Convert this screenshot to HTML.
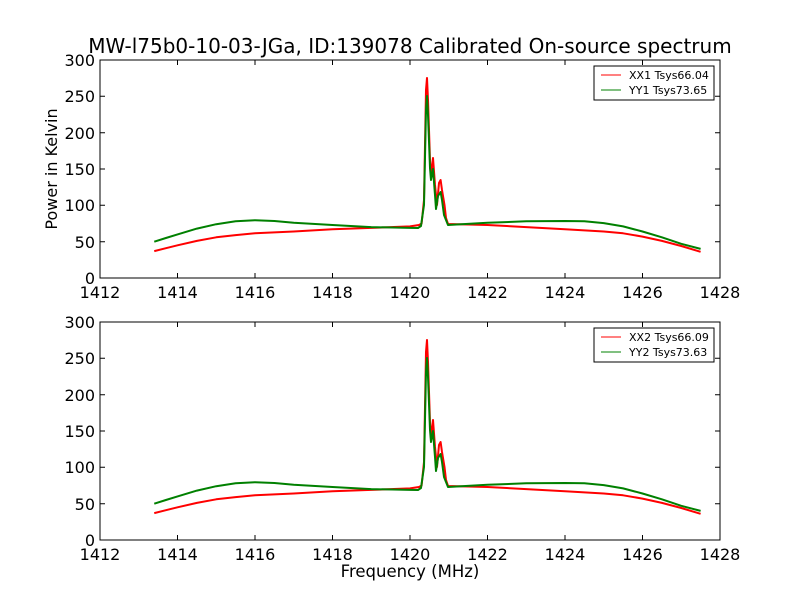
<!DOCTYPE html><html><head><style>body{margin:0;background:#fff}svg{display:block}text{font-family:"DejaVu Sans",sans-serif;fill:#000}</style></head><body>
<svg width="800" height="600" viewBox="0 0 800 600" xmlns="http://www.w3.org/2000/svg">
<rect width="800" height="600" fill="#fff"/>
<text x="410" y="53" font-size="20" text-anchor="middle">MW-l75b0-10-03-JGa, ID:139078 Calibrated On-source spectrum</text>
<defs>
<g id="ax">
<polyline fill="none" stroke="#ff0000" stroke-width="2" stroke-linejoin="round" points="154.25,251.1 165.9,248.2 177.5,245.3 196.9,240.9 216.25,237.3 235.6,235.1 255,233.3 293.75,231.5 332.5,229.3 371.25,227.9 410,226.4 419,225 421.6,223.5 424,200 426,90 427,78 428,100 430,160 431,176 433,158 435,185 437,205 439,183 440.6,180 442,190 444.5,205 446,218 448,224 487.5,225 526.25,227.1 565,229.3 603.75,231.5 623.1,233.3 642.5,236.6 661.9,240.9 681.25,246 700.6,251.8"/>
<polyline fill="none" stroke="#008000" stroke-width="2" stroke-linejoin="round" points="154.25,241.7 165.9,238 177.5,234.4 196.9,228.6 216.25,224.2 235.6,221.3 255,220.2 274.4,221 293.75,222.8 332.5,225 371.25,227.1 410,227.9 418,228 421,226 424,205 426,110 427,96 428,115 430,168 431,180 433,169 435,195 436,209 438,196 440.6,192 442,200 444,215 448,225 487.5,222.8 526.25,221.3 565,221 584.4,221.3 603.75,223.1 623.1,226.4 642.5,231.5 661.9,237.3 681.25,243.8 700.6,248.9"/>
<rect x="100" y="60" width="620" height="218" fill="none" stroke="#000" stroke-width="1"/>
<g stroke="#000" stroke-width="1">
<path d="M100,278v-5M177.5,278v-5M255,278v-5M332.5,278v-5M410,278v-5M487.5,278v-5M565,278v-5M642.5,278v-5M720,278v-5M100,60v5M177.5,60v5M255,60v5M332.5,60v5M410,60v5M487.5,60v5M565,60v5M642.5,60v5M720,60v5"/>
<path d="M100,241.7h5M100,205.3h5M100,169h5M100,132.7h5M100,96.3h5M720,241.7h-5M720,205.3h-5M720,169h-5M720,132.7h-5M720,96.3h-5"/>
</g>
<g font-size="16" text-anchor="end">
<text x="95" y="284">0</text><text x="95" y="248">50</text><text x="95" y="211">100</text><text x="95" y="175">150</text><text x="95" y="139">200</text><text x="95" y="102">250</text><text x="95" y="66">300</text>
</g>
<g font-size="16" text-anchor="middle">
<text x="100" y="298">1412</text><text x="177.5" y="298">1414</text><text x="255" y="298">1416</text><text x="332.5" y="298">1418</text><text x="410" y="298">1420</text><text x="487.5" y="298">1422</text><text x="565" y="298">1424</text><text x="642.5" y="298">1426</text><text x="720" y="298">1428</text>
</g>
<rect x="594" y="66" width="120" height="34" fill="#fff" stroke="#000"/>
<path d="M601,75h20" stroke="#ff0000"/><path d="M601,90h20" stroke="#008000"/>
</g>
</defs>
<use href="#ax"/>
<text x="629" y="79" font-size="11">XX1 Tsys66.04</text>
<text x="629" y="94" font-size="11">YY1 Tsys73.65</text>
<g transform="translate(0,262)"><use href="#ax"/>
<text x="629" y="79" font-size="11">XX2 Tsys66.09</text>
<text x="629" y="94" font-size="11">YY2 Tsys73.63</text></g>
<text transform="translate(57,169) rotate(-90)" font-size="16" text-anchor="middle">Power in Kelvin</text>
<text x="410" y="577" font-size="16.5" text-anchor="middle">Frequency (MHz)</text>
</svg>
</body></html>
